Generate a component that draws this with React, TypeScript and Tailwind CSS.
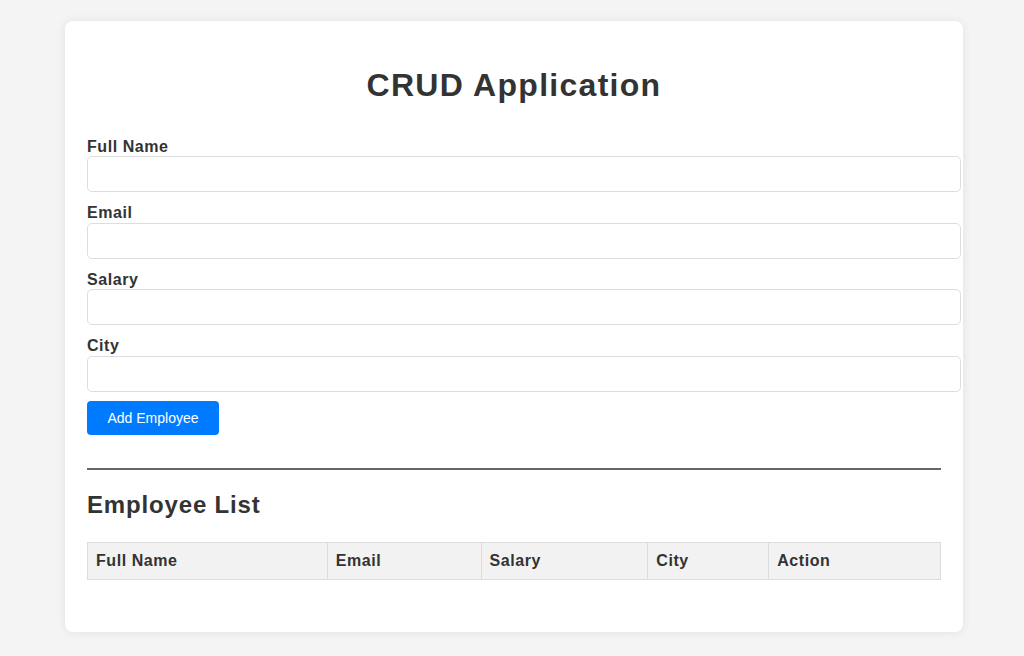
const fields = ['Full Name', 'Email', 'Salary', 'City'];

const columns = [
  { label: 'Full Name', w: 'w-[240px]' },
  { label: 'Email', w: 'w-[154px]' },
  { label: 'Salary', w: 'w-[167px]' },
  { label: 'City', w: 'w-[121px]' },
  { label: 'Action', w: 'w-[172px]' },
];

export default function App() {
  return (
    <div className="min-h-[656px] bg-[#f4f4f4] pt-[21px] font-['Liberation_Sans',Arial,sans-serif] text-[#333]">
      <div className="ml-[65px] w-[898px] rounded-lg bg-white px-[22px] pb-[52px] pt-[41px] shadow-[0_0_10px_rgba(0,0,0,0.08)]">
        <h1 className="mt-[5px] text-center text-[32px] font-bold leading-[37px] tracking-[0.04em]">CRUD Application</h1>

        <form className="mt-[34px]" onSubmit={(e) => e.preventDefault()}>
          {fields.map((f) => (
            <div key={f} className="mb-[12px]">
              <label className="block text-base font-bold leading-[18.4px] tracking-[0.035em]">{f}</label>
              <input
                type="text"
                className="block h-[36px] w-[874px] rounded-[5px] border border-[#ddd] bg-white px-2 outline-none"
              />
            </div>
          ))}
          <button
            type="submit"
            className="-mt-[3px] h-[34px] w-[132px] rounded-[4px] bg-[#007bff] text-sm text-white"
          >
            Add Employee
          </button>
        </form>

        <hr className="mt-[33px] border-t-2 border-[#666]" />

        <h2 className="mt-[21px] text-2xl font-bold leading-[28px] tracking-[0.035em]">Employee List</h2>

        <table className="mt-[23px] w-[854px] border-collapse">
          <thead>
            <tr className="bg-[#f2f2f2]">
              {columns.map((c) => (
                <th
                  key={c.label}
                  className={`${c.w} h-[37px] border border-[#ddd] px-[8px] text-left text-base font-bold tracking-[0.035em]`}
                >
                  {c.label}
                </th>
              ))}
            </tr>
          </thead>
          <tbody />
        </table>
      </div>
    </div>
  );
}
